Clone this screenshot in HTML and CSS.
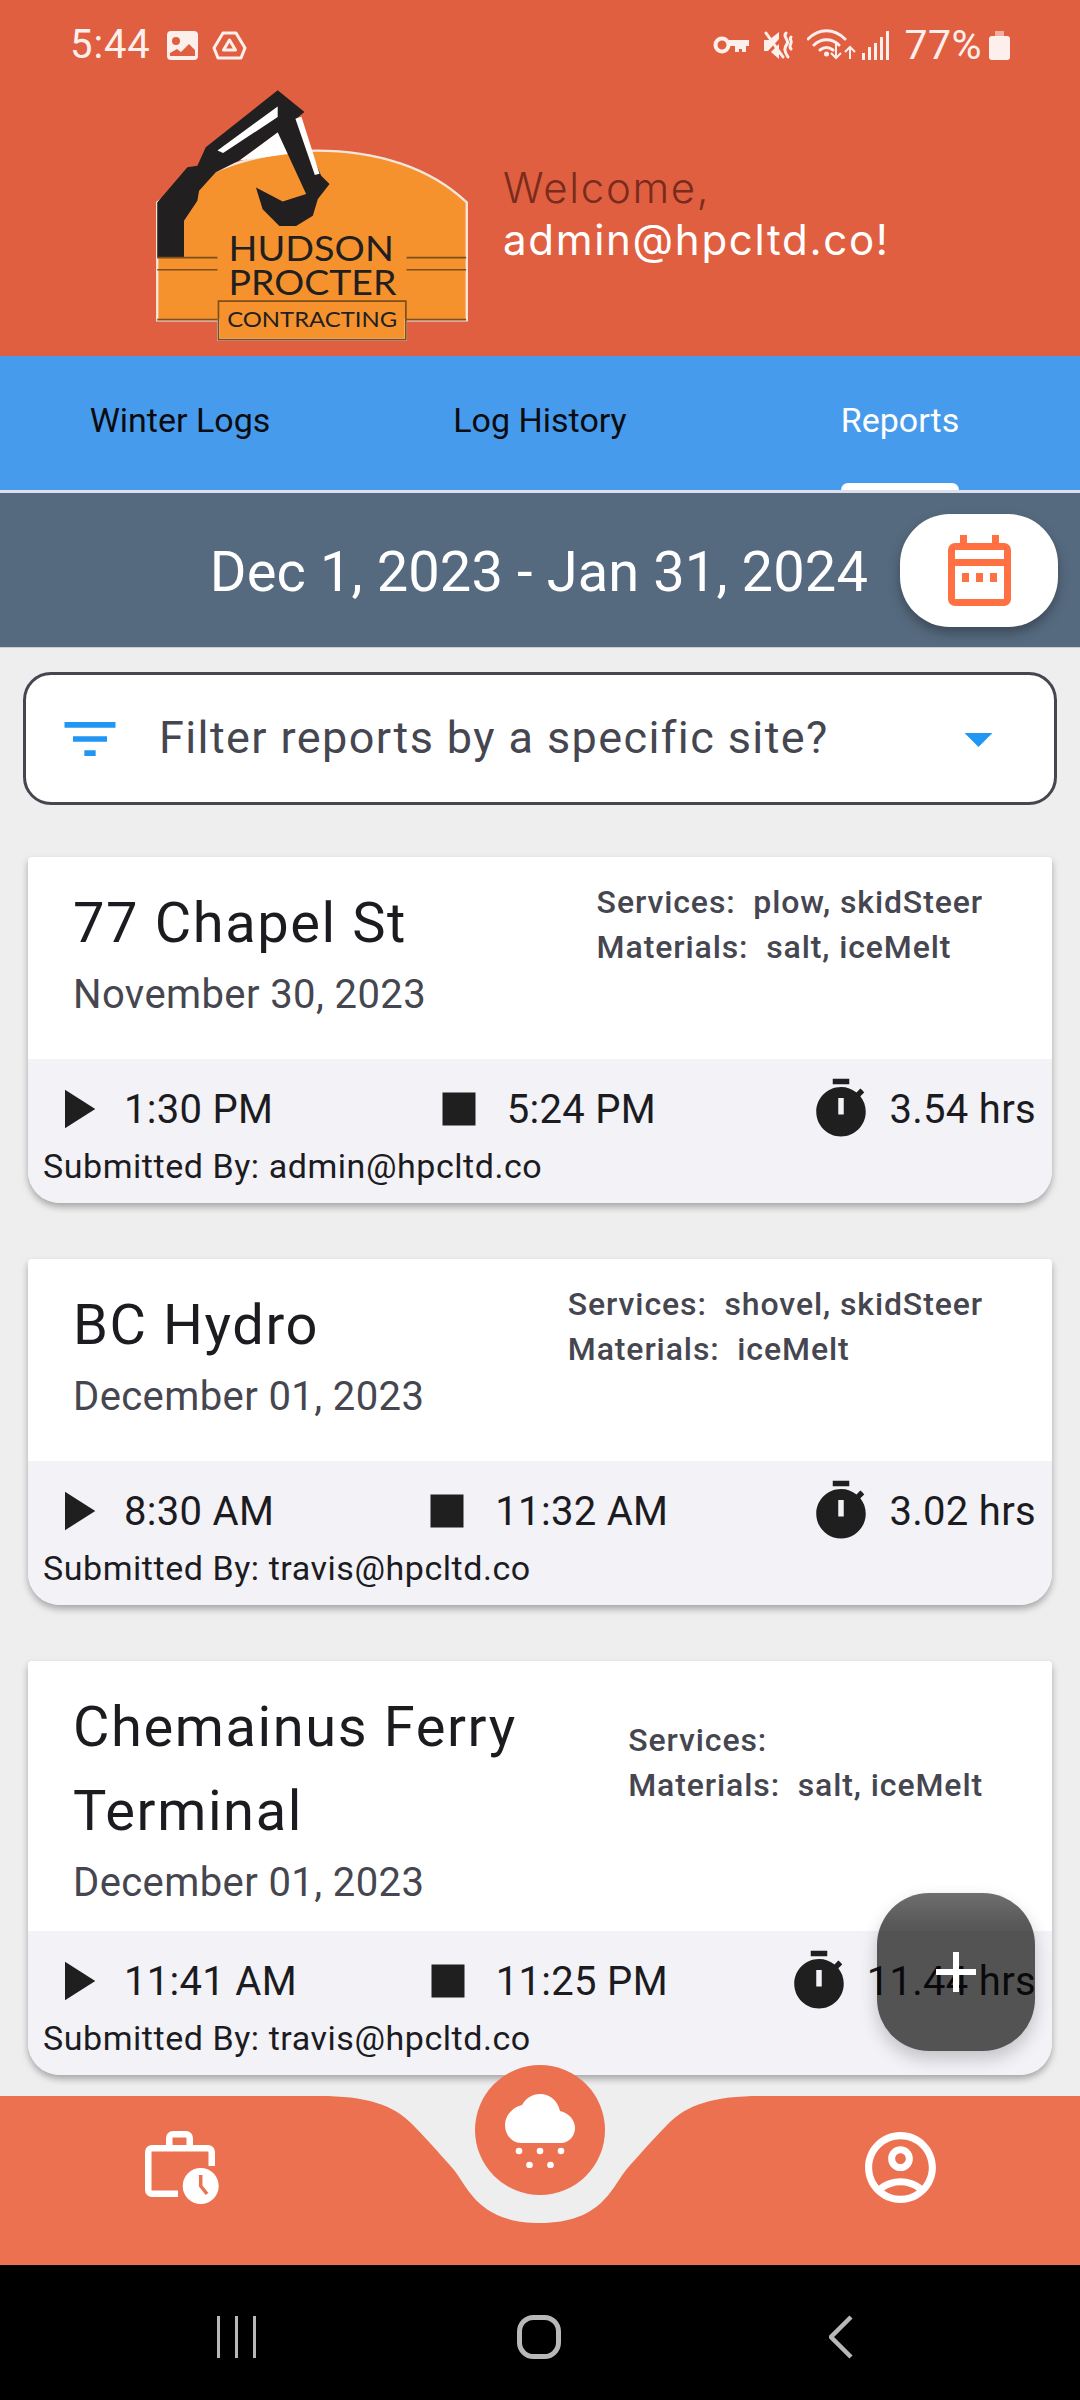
FILE: index.html
```html
<!DOCTYPE html>
<html lang="en">
<head>
<meta charset="utf-8">
<title>Reports</title>
<link rel="stylesheet" href="styles.css">
</head>
<body>
<div class="app">
  <header class="header">
    <div class="status">
      <span class="clock">5:44</span>
      <svg class="st-img" viewBox="0 0 31 29"><path fill-rule="evenodd" d="M4 0h23a4 4 0 0 1 4 4v21a4 4 0 0 1-4 4H4a4 4 0 0 1-4-4V4a4 4 0 0 1 4-4zM9 6a4 4 0 1 0 0 8 4 4 0 0 0 0-8zM3 22v3h25v-6l-6-6-8 8-4-3z"/></svg>
      <svg class="st-drive" viewBox="0 0 35 29"><path class="st-line" d="M11 2h13l9 15-4 10H6L2 17z"/><path class="st-line" d="M17.500 9l6 10h-12z"/></svg>
      <div class="status-right">
        <svg class="st-key" viewBox="0 0 36 18"><circle class="st-ring" cx="9" cy="9" r="6.500"/><path d="M15 4h21v6h-3v6h-4v-3h-3v3h-4v-6h-7z"/></svg>
        <svg class="st-mute" viewBox="0 0 30 29"><path d="M0 9h5l10-8v7L4 20H0zM7 21l8-8v15z"/><path class="st-line" d="M2 2l17 24M22 2c-4 4 4 7 1 11s-3 7 1 13M27 6c-2 2 1 3 0 6s-2 4 0 6"/></svg>
        <svg class="st-wifi" viewBox="0 0 49 32"><path class="st-line" d="M1 10c11-11 26-11 37 0M7 16c7-7 18-7 25 0M13 21c4-3 9-3 13 0"/><circle cx="19.500" cy="25" r="2.500"/><path class="st-thin" d="M29 15v13M24 24l5 5 5-5M43 30V18M38 23l5-5 5 5"/></svg>
        <svg class="st-signal" viewBox="0 0 27 29"><path d="M0 22h3v7H0zM6 16h3v13H6zM12 12h3v17h-3zM18 6h3v23h-3zM24 0h3v29h-3z"/></svg>
        <span class="pct">77%</span>
        <svg class="st-batt" viewBox="0 0 21 29"><path class="st-batt-top" d="M6 0h9v5H6z"/><rect y="5" width="21" height="24" rx="3"/></svg>
      </div>
    </div>
    <div class="hero">
      <svg class="logo" viewBox="70 55 955 765">
        <path class="logo-edge" d="M85 400C230 300 400 245 560 245c180 0 340 50 450 155v352H828v58H268v-58H85z"/>
        <path class="logo-white" d="M330 275L445 190 530 248z"/>
        <path class="logo-ink" d="M85 400L175 295l30-5 25-55L445 65l80 65-25 20 75 170 25 25-35 45-15 50-50 30-50 0-50-50-20-65 80 42 70-22L445 190 330 275l-70 35-50 55-5 30-40 60v110H85z"/>
        <path class="logo-white" d="M265 245L445 113v32L282 252z"/>
        <path class="logo-white" d="M498 150l18-6 54 170-14 4z"/>
        <path class="logo-rule" d="M85 565h180M830 565h178M85 601h180M830 601h178M85 750h180M830 750h178M268 695h560v115H268z"/>
        <text class="logo-big" x="298" y="576" textLength="494" lengthAdjust="spacingAndGlyphs">HUDSON</text>
        <text class="logo-big" x="298" y="678" textLength="502" lengthAdjust="spacingAndGlyphs">PROCTER</text>
        <text class="logo-small" x="294" y="772" textLength="508" lengthAdjust="spacingAndGlyphs">CONTRACTING</text>
      </svg>
      <div class="welcome">
        <div class="welcome-top">Welcome,</div>
        <div class="welcome-user">admin@hpcltd.co!</div>
      </div>
    </div>
  </header>

  <nav class="tabs">
    <div class="tab">Winter Logs</div>
    <div class="tab">Log History</div>
    <div class="tab tab-active">Reports</div>
  </nav>

  <div class="datebar">
    <span class="daterange">Dec 1, 2023 - Jan 31, 2024</span>
    <div class="calbtn">
      <svg class="cal" viewBox="0 0 63 71"><path fill-rule="evenodd" d="M12 0h7v8h25V0h7v8h5a7 7 0 0 1 7 7v49a7 7 0 0 1-7 7H7a7 7 0 0 1-7-7V15a7 7 0 0 1 7-7h5zM7 15v9h49v-9zM7 31v33h49V31z"/><path d="M14 38h7v9h-7zM28 38h7v9h-7zM42 38h7v9h-7z"/></svg>
    </div>
  </div>

  <main class="main">
    <div class="filter">
      <svg class="filter-icon" viewBox="0 0 24 24"><path d="M10 18h4v-2h-4v2zM3 6v2h18V6H3zm3 7h12v-2H6v2z"/></svg>
      <span class="filter-text">Filter reports by a specific site?</span>
      <svg class="filter-drop" viewBox="0 0 24 24"><path d="M7 10l5 5 5-5z"/></svg>
    </div>

    <article class="card">
      <div class="card-top">
        <div class="card-head">
          <div class="card-title">77 Chapel St</div>
          <div class="card-date">November 30, 2023</div>
        </div>
        <div class="card-meta">
          <div>Services:&nbsp; plow, skidSteer</div>
          <div>Materials:&nbsp; salt, iceMelt</div>
        </div>
      </div>
      <div class="card-foot">
        <div class="times">
          <div class="time"><svg class="ti" viewBox="0 0 24 24"><path d="M8 5v14l11-7z"/></svg><span>1:30 PM</span></div>
          <div class="time"><svg class="ti" viewBox="0 0 24 24"><path d="M6 6h12v12H6z"/></svg><span>5:24 PM</span></div>
          <div class="time"><svg class="ti" viewBox="0 0 24 24"><path fill-rule="evenodd" d="M15 1H9v2h6V1zm-4 13h2V8h-2v6zm8.030-6.610l1.420-1.420c-.43-.51-.9-.99-1.410-1.410l-1.420 1.420C16.070 4.740 14.120 4 12 4c-4.970 0-9 4.030-9 9s4.020 9 9 9 9-4.030 9-9c0-2.120-.74-4.070-1.970-5.610z"/></svg><span>3.54 hrs</span></div>
        </div>
        <div class="submitted">Submitted By: admin@hpcltd.co</div>
      </div>
    </article>

    <article class="card">
      <div class="card-top">
        <div class="card-head">
          <div class="card-title">BC Hydro</div>
          <div class="card-date">December 01, 2023</div>
        </div>
        <div class="card-meta">
          <div>Services:&nbsp; shovel, skidSteer</div>
          <div>Materials:&nbsp; iceMelt</div>
        </div>
      </div>
      <div class="card-foot">
        <div class="times">
          <div class="time"><svg class="ti" viewBox="0 0 24 24"><path d="M8 5v14l11-7z"/></svg><span>8:30 AM</span></div>
          <div class="time"><svg class="ti" viewBox="0 0 24 24"><path d="M6 6h12v12H6z"/></svg><span>11:32 AM</span></div>
          <div class="time"><svg class="ti" viewBox="0 0 24 24"><path fill-rule="evenodd" d="M15 1H9v2h6V1zm-4 13h2V8h-2v6zm8.030-6.610l1.420-1.420c-.43-.51-.9-.99-1.410-1.410l-1.420 1.420C16.070 4.740 14.120 4 12 4c-4.970 0-9 4.030-9 9s4.020 9 9 9 9-4.030 9-9c0-2.120-.74-4.070-1.970-5.610z"/></svg><span>3.02 hrs</span></div>
        </div>
        <div class="submitted">Submitted By: travis@hpcltd.co</div>
      </div>
    </article>

    <article class="card">
      <div class="card-top">
        <div class="card-head">
          <div class="card-title">Chemainus Ferry Terminal</div>
          <div class="card-date">December 01, 2023</div>
        </div>
        <div class="card-meta">
          <div>Services:</div>
          <div>Materials:&nbsp; salt, iceMelt</div>
        </div>
      </div>
      <div class="card-foot">
        <div class="times">
          <div class="time"><svg class="ti" viewBox="0 0 24 24"><path d="M8 5v14l11-7z"/></svg><span>11:41 AM</span></div>
          <div class="time"><svg class="ti" viewBox="0 0 24 24"><path d="M6 6h12v12H6z"/></svg><span>11:25 PM</span></div>
          <div class="time"><svg class="ti" viewBox="0 0 24 24"><path fill-rule="evenodd" d="M15 1H9v2h6V1zm-4 13h2V8h-2v6zm8.030-6.610l1.420-1.420c-.43-.51-.9-.99-1.410-1.410l-1.420 1.420C16.070 4.740 14.120 4 12 4c-4.970 0-9 4.030-9 9s4.020 9 9 9 9-4.030 9-9c0-2.120-.74-4.070-1.970-5.610z"/></svg><span>11.44 hrs</span></div>
        </div>
        <div class="submitted">Submitted By: travis@hpcltd.co</div>
      </div>
    </article>

    <div class="fab"><svg class="fab-plus" viewBox="0 0 40 40"><path d="M17 0h6v17h17v6H23v17h-6V23H0v-6h17z"/></svg></div>
  </main>

  <nav class="bottom">
    <svg class="notch" viewBox="0 0 1080 169"><path d="M320 0C365 0 393 8 413 29 432 49 442 60 454 74 468 91 478 127 540 127S612 91 626 74C638 60 648 49 667 29 687 8 715 0 760 0z"/></svg>
    <div class="bottom-item">
      <svg class="bi-work" viewBox="0 0 75 74"><path class="bi-stroke" d="M33 63.750H7a3.750 3.750 0 0 1-3.750-3.750V22a3.750 3.750 0 0 1 3.750-3.750H63a3.750 3.750 0 0 1 3.750 3.750V36M24.250 18V8a3.750 3.750 0 0 1 3.750-3.750H41a3.750 3.750 0 0 1 3.750 3.750V18"/><circle cx="55.700" cy="56" r="18"/><path class="bi-hand" d="M55.700 45v11l6.300 8"/></svg>
    </div>
    <div class="bottom-item"></div>
    <div class="bottom-item">
      <svg class="bi-user" viewBox="0 0 24 24"><path d="M12 2C6.480 2 2 6.480 2 12s4.480 10 10 10 10-4.480 10-10S17.520 2 12 2zM7.350 18.500C8.660 17.560 10.260 17 12 17s3.340.56 4.650 1.500C15.340 19.440 13.740 20 12 20s-3.340-.56-4.650-1.500zm10.790-1.380C16.450 15.800 14.320 15 12 15s-4.450.8-6.140 2.120C4.700 15.730 4 13.950 4 12c0-4.420 3.580-8 8-8s8 3.580 8 8c0 1.950-.7 3.730-1.860 5.120z"/><path d="M12 6c-1.930 0-3.500 1.570-3.500 3.500S10.070 13 12 13s3.500-1.570 3.500-3.500S13.930 6 12 6zm0 5c-.83 0-1.500-.67-1.500-1.500S11.170 8 12 8s1.500.67 1.500 1.500S12.830 11 12 11z"/></svg>
    </div>
    <div class="bubble">
      <svg class="bi-snow" viewBox="0 0 70 76"><path d="M16 51C7 51 0 43 0 33 0 24 7 15.500 17 13 21 6 27 2 35 2c10 0 18 7 20 17 9 2 15 9 15 17 0 8-6 15-14 15z"/><circle cx="14" cy="59" r="3.300"/><circle cx="35" cy="59" r="3.300"/><circle cx="56" cy="59" r="3.300"/><circle cx="24.500" cy="73" r="3.300"/><circle cx="45.500" cy="73" r="3.300"/></svg>
    </div>
  </nav>

  <div class="sysnav">
    <div class="sys-item"><svg class="sys-recent" viewBox="0 0 39 42"><path d="M1.500 0v42M19.500 0v42M37.500 0v42"/></svg></div>
    <div class="sys-item"><svg class="sys-home" viewBox="0 0 44 44"><rect x="2.500" y="2.500" width="39" height="39" rx="14"/></svg></div>
    <div class="sys-item"><svg class="sys-back" viewBox="0 0 24 44"><path d="M22 2L2 22l20 20"/></svg></div>
  </div>
</div>
</body>
</html>
```

FILE: styles.css
```css
* { box-sizing: border-box; }
html, body { margin: 0; padding: 0; }
body { width: 1080px; height: 2400px; overflow: hidden; background: #eeeeee; font-family: Roboto, "Liberation Sans", sans-serif; }
.app { width: 1080px; height: 2400px; display: flex; flex-direction: column; }

.header { height: 356px; background: #e15f41; flex: none; }
.status { height: 88px; padding: 2px 70px 0 70px; display: flex; align-items: center; color: #fdf0ec; fill: #fdf0ec; }
.clock { font-size: 40px; font-weight: 400; letter-spacing: .9px; line-height: 46px; }
.st-img { width: 31px; height: 29px; margin-left: 16px; }
.st-drive { width: 35px; height: 29px; margin-left: 14px; }
.st-line { fill: none; stroke: #fdf0ec; stroke-width: 3; stroke-linecap: round; stroke-linejoin: round; }
.st-thin { fill: none; stroke: #fdf0ec; stroke-width: 2; }
.status-right { margin-left: auto; display: flex; align-items: center; }
.st-ring { fill: none; stroke: #fdf0ec; stroke-width: 4; }
.st-key { width: 36px; height: 18px; }
.st-mute { width: 30px; height: 29px; margin-left: 15px; }
.st-wifi { width: 49px; height: 32px; margin-left: 13px; }
.st-signal { width: 27px; height: 29px; margin-left: 6px; }
.pct { font-size: 41px; font-weight: 400; line-height: 46px; letter-spacing: .5px; margin-left: 15px; }
.st-batt { width: 21px; height: 29px; margin-left: 7px; }
.st-batt-top { opacity: .55; }

.hero { height: 268px; padding: 0 0 14px 152px; display: flex; align-items: center; gap: 31px; }
.logo { width: 320px; height: 256px; flex: none; }
.logo-edge { fill: #f6922e; stroke: #f3e6dc; stroke-width: 7; }
.logo-ink { fill: #211f20; }
.logo-white { fill: #ffffff; }
.logo-rule { fill: none; stroke: #7c4f1d; stroke-width: 5; }
.logo-big { font-family: Lato, "Liberation Sans", sans-serif; font-size: 106px; fill: #211f20; }
.logo-small { font-family: Lato, "Liberation Sans", sans-serif; font-size: 62px; fill: #211f20; }
.welcome { font-family: Inter, "Liberation Sans", sans-serif; font-size: 42px; line-height: 52px; letter-spacing: 1.700px; margin-top: -2px; }
.welcome-top { color: #7a2c1c; font-weight: 300; }
.welcome-user { color: #ffffff; font-weight: 400; }

.tabs { flex: none; height: 137px; display: grid; grid-template-columns: repeat(3, 1fr); background: #469bec; border-bottom: 3px solid #dcdfec; }
.tab { position: relative; display: flex; align-items: center; justify-content: center; font-size: 34px; color: #0c0c10; padding-bottom: 6px; }
.tab-active { color: #ffffff; }
.tab-active::after { content: ""; position: absolute; left: 121px; right: 121px; bottom: 0; height: 7px; background: #ffffff; border-radius: 7px 7px 0 0; }

.datebar { flex: none; height: 155px; background: #566a7f; border-bottom: 1px solid #c9ced6; display: flex; align-items: center; justify-content: flex-end; gap: 32px; padding: 0 22px 0 0; }
.daterange { color: #ffffff; font-size: 56px; line-height: 64px; letter-spacing: .12px; margin-top: 3px; }
.calbtn { width: 158px; height: 113px; background: #ffffff; border-radius: 50px; display: flex; align-items: center; justify-content: center; box-shadow: 0 6px 12px rgba(0,0,0,.3); }
.cal { width: 63px; height: 71px; fill: #ff7043; }

.main { flex: 1; position: relative; padding: 24px 28px 0; min-height: 0; }
.filter { height: 133px; margin: 0 -5px 52px; border: 3px solid #45464f; border-radius: 28px; background: #ffffff; display: flex; align-items: center; padding: 0 42px 0 30px; }
.filter-icon { width: 68px; height: 68px; fill: #2196f3; flex: none; }
.filter-text { margin-left: 35px; padding-bottom: 2px; font-size: 45px; letter-spacing: 1.400px; color: #45464f; }
.filter-drop { width: 67px; height: 67px; fill: #2196f3; margin-left: auto; }

.card { background: #ffffff; border-radius: 4px 4px 32px 32px; box-shadow: 0 4px 7px rgba(0,0,0,.3); margin-bottom: 56px; overflow: hidden; }
.card-top { min-height: 202px; display: flex; justify-content: space-between; align-items: center; padding-right: 69px; }
.card-head { align-self: flex-start; padding: 24px 0 20px 45px; max-width: 520px; }
.card-title { font-size: 56px; line-height: 84px; letter-spacing: 1.600px; color: #1c1b1f; }
.card-date { font-size: 40px; line-height: 56px; margin-top: 2px; letter-spacing: .4px; color: #45464f; }
.card-meta { font-size: 32px; line-height: 45px; font-weight: 500; letter-spacing: .9px; color: #45464f; margin-bottom: 66px; white-space: nowrap; }
.card-foot { background: #f2f2f7; height: 144px; padding: 17px 16px 0 15px; }
.times { display: flex; justify-content: space-between; height: 66px; margin-bottom: 4px; }
.time { display: flex; align-items: center; gap: 15px; font-size: 40px; color: #1c1b1f; letter-spacing: .3px; }
.ti { width: 66px; height: 66px; fill: #1f1f1f; flex: none; }
.submitted { font-size: 34px; line-height: 40px; letter-spacing: .55px; color: #1c1b1f; }

.fab { position: absolute; right: 45px; bottom: 45px; width: 158px; height: 158px; border-radius: 52px; background: linear-gradient(rgba(0,0,0,.57), rgba(0,0,0,.66) 34px); box-shadow: 0 8px 18px rgba(0,0,0,.2); display: flex; align-items: center; justify-content: center; }
.fab-plus { width: 40px; height: 40px; fill: #ffffff; }

.bottom { flex: none; height: 169px; position: relative; background: #ec7150; display: grid; grid-template-columns: repeat(3, 1fr); padding-bottom: 27px; }
.notch { position: absolute; left: 0; top: 0; width: 1080px; height: 169px; fill: #eeeeee; }
.bottom-item { display: flex; align-items: center; justify-content: center; }
.bi-work { width: 75px; height: 74px; fill: #ffffff; margin-left: 5px; }
.bi-stroke { fill: none; stroke: #ffffff; stroke-width: 6.500; }
.bi-hand { fill: none; stroke: #ec7150; stroke-width: 3.500; }
.bi-user { width: 85px; height: 85px; fill: #ffffff; }
.bubble { position: absolute; left: 475px; top: -31px; width: 130px; height: 130px; border-radius: 50%; background: #ec7150; display: flex; align-items: center; justify-content: center; }
.bi-snow { width: 70px; height: 76px; fill: #ffffff; }

.sysnav { flex: none; height: 135px; background: #000000; display: grid; grid-template-columns: repeat(3, 1fr); padding-top: 9px; }
.sys-item { display: flex; align-items: center; justify-content: center; }
.sys-recent { width: 39px; height: 42px; fill: none; stroke: #b8b8b8; stroke-width: 3; margin-left: 112px; }
.sys-home { width: 44px; height: 44px; fill: none; stroke: #b8b8b8; stroke-width: 5; margin-left: -2px; }
.sys-back { width: 24px; height: 44px; fill: none; stroke: #b8b8b8; stroke-width: 4.500; margin-right: 118px; }
```
